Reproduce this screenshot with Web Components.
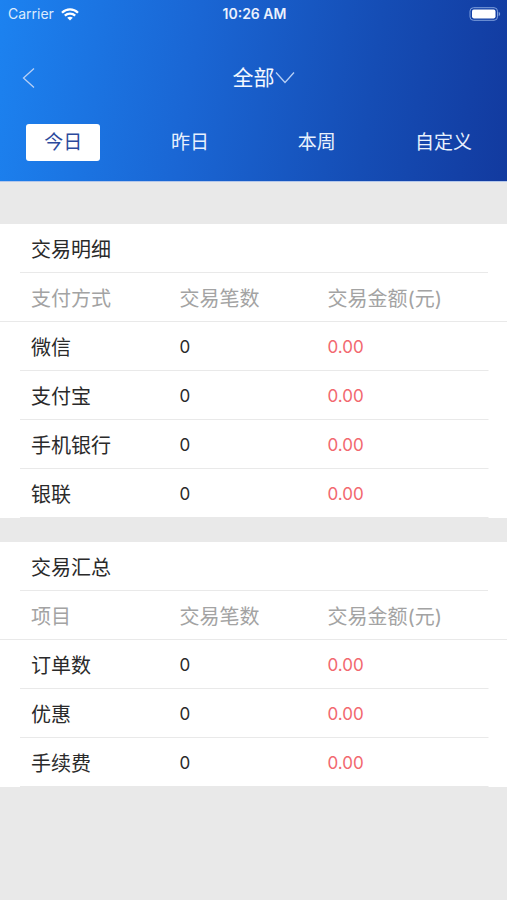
<!DOCTYPE html>
<html lang="zh-CN">
<head>
<meta charset="utf-8">
<meta name="viewport" content="width=device-width, initial-scale=1">
<title>交易统计</title>
<style>
body { margin: 0; min-height: 100vh; background: #e9e9e9; color: #2a2a2a; font-family: Inter, "Noto Sans CJK SC", sans-serif; }
</style>
</head>
<body>
<stats-page></stats-page>
<script>
const define = (name, markup) => customElements.define(name, class extends HTMLElement {
  connectedCallback() {
    if (this.shadowRoot) return;
    this.attachShadow({ mode: 'open' }).innerHTML = markup(this);
  }
});

define('status-bar', () => `
<style>
:host { display: grid; grid-template-columns: 1fr auto 1fr; align-items: center; height: 28px; padding: 0 6px 0 8px; color: #fff; font-size: 14px; line-height: 20px; }
.left { display: flex; align-items: center; gap: 7px; color: #dcebfd; }
.time { font-weight: 600; color: #eaf1fd; }
.battery { justify-self: end; }
svg { display: block; }
</style>
<span class="left"><span>Carrier</span>
<svg width="18" height="13" viewBox="0 0 18 13" fill="none" stroke="#fff" stroke-width="2.3" aria-hidden="true">
<path d="M1 4.8C5.6.3 12.4.3 17 4.8"/><path d="M3.8 7.7c3-2.9 7.4-2.9 10.4 0"/><path d="M9 12.6 6.2 9.8c1.7-1.5 3.9-1.5 5.6 0z" fill="#fff" stroke="none"/></svg></span>
<span class="time">10:26 AM</span>
<svg class="battery" width="32" height="14" viewBox="0 0 32 14" aria-hidden="true">
<rect x="1" y=".7" width="27.5" height="12.6" rx="3.5" fill="none" stroke="#7f9fdc"/><rect x="3" y="2.6" width="23.5" height="8.8" rx="1.8" fill="#fff"/><path d="M29.7 4.8c2 .8 2 3.6 0 4.4z" fill="#7f9fdc"/></svg>`);

define('nav-bar', () => `
<style>
:host { display: grid; grid-template-columns: 1fr auto 1fr; align-items: center; height: 92px; padding: 4px 20px 0; color: #f4f8ff; }
button { all: unset; display: flex; align-items: center; cursor: pointer; font-size: 21px; line-height: 30px; justify-self: start; }
.title { padding-left: 20px; }
svg { display: block; fill: none; stroke: #b8d0f5; stroke-width: 1.3; }
</style>
<button type="button" aria-label="返回"><svg width="16" height="22" viewBox="0 0 16 22"><path d="M14 1.5 3.5 11 14 20.5"/></svg></button>
<button class="title" type="button"><slot></slot><svg width="20" height="14" viewBox="0 0 20 14"><path d="M1 1.5l9 10 9-10"/></svg></button>`);

define('period-tab', el => `
<style>
:host { display: grid; justify-items: center; }
button { all: unset; box-sizing: border-box; min-width: 74px; height: 37px; padding: 1px 8px 0; border-radius: 3px; text-align: center; white-space: nowrap; font-size: 19px; line-height: 36px; color: #e8f1fd; cursor: pointer; }
button[aria-pressed="true"] { background: #fff; color: #2c4a9c; }
</style>
<button type="button" aria-pressed="${el.hasAttribute('selected')}"><slot></slot></button>`);

define('app-header', () => `
<style>
:host { display: block; background: linear-gradient(98deg, #1c82f0 0%, #1a66d4 38%, #154db5 72%, #123a9f 100%); border-bottom: 1px solid #b4c7ea; }
nav { display: grid; grid-template-columns: repeat(4, 1fr); padding-bottom: 20px; }
</style>
<status-bar></status-bar>
<nav-bar>全部</nav-bar>
<nav><period-tab selected>今日</period-tab><period-tab>昨日</period-tab><period-tab>本周</period-tab><period-tab>自定义</period-tab></nav>`);

define('stats-table', el => {
  const cols = el.getAttribute('columns').split(',');
  const rows = el.getAttribute('rows').split(',');
  return `
<style>
:host { display: block; background: #fff; }
table { width: 100%; border-collapse: collapse; table-layout: fixed; font-size: 20px; line-height: 28px; text-align: left; }
caption, th, td { box-sizing: border-box; height: 49px; padding: 2px 0 0; font-weight: 400; text-align: left; vertical-align: middle; white-space: nowrap; }
caption { padding: 12px 0 9px 31px; }
th:first-child { padding-left: 31px; }
th:nth-child(1) { width: 35.4%; }
th:nth-child(2) { width: 29.2%; }
caption, tbody tr { background: linear-gradient(#e9e9e9, #e9e9e9) 20px 100% / calc(100% - 39px) 1px no-repeat; }
thead tr { color: #a3a3a3; background: linear-gradient(#e9e9e9, #e9e9e9) 0 100% / 100% 1px no-repeat; }
td { padding: 0; font-size: 17px; }
td:last-child { color: #f2686f; }
</style>
<table><caption>${el.getAttribute('heading')}</caption>
<thead><tr>${cols.map(c => `<th scope="col">${c}</th>`).join('')}</tr></thead>
<tbody>${rows.map(r => `<tr><th scope="row">${r}</th><td>0</td><td>0.00</td></tr>`).join('')}</tbody></table>`;
});

define('stats-page', () => `
<style>
:host { display: block; }
main { display: grid; gap: 24px; padding: 42px 0 24px; }
</style>
<app-header></app-header>
<main>
<stats-table heading="交易明细" columns="支付方式,交易笔数,交易金额(元)" rows="微信,支付宝,手机银行,银联"></stats-table>
<stats-table heading="交易汇总" columns="项目,交易笔数,交易金额(元)" rows="订单数,优惠,手续费"></stats-table>
</main>`);
</script>
</body>
</html>
